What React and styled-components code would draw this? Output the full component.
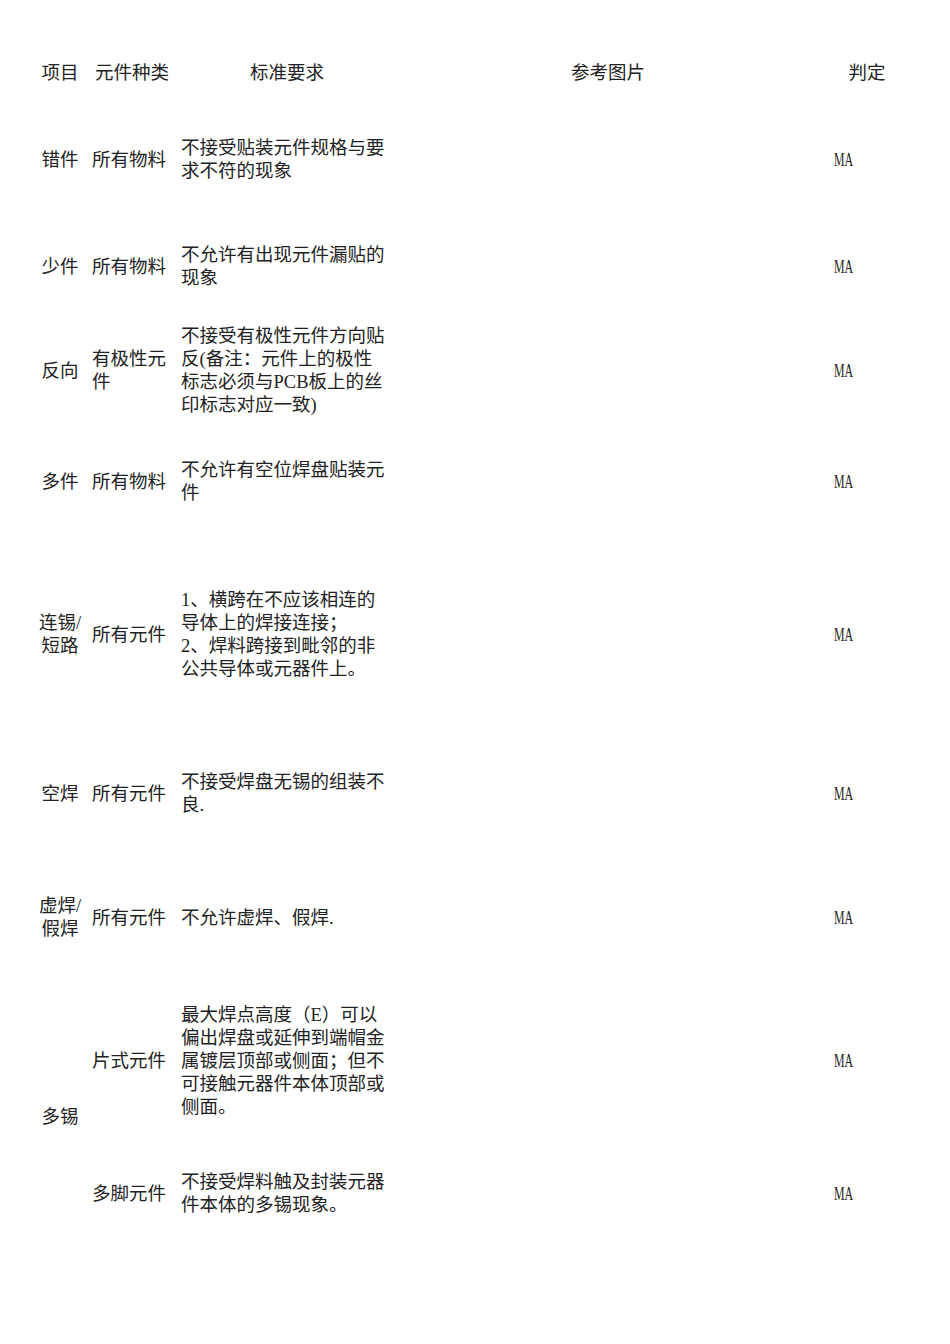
import React from 'react'
import styled, { createGlobalStyle } from 'styled-components'

const GlobalStyle = createGlobalStyle`
body {
  margin: 0;
  background: #fff;
}
`

const Page = styled.div`
width: 950px;
min-height: 1344px;
padding-top: 48px;
box-sizing: border-box;
background: #fff;
font-family: "Liberation Serif", "Noto Sans CJK SC", serif;
font-size: 18.5px;
line-height: 23px;
color: #222;
`

const Sheet = styled.table`
margin-left: 34px;
border-collapse: collapse;
table-layout: fixed;
width: 880px;
`

const Row = styled.tr`
height: ${p => p.h}px;
`

const HeadCell = styled.th`
font-weight: normal;
text-align: center;
vertical-align: middle;
padding: 0;
white-space: nowrap;
`

const ItemCell = styled.td`
text-align: center;
vertical-align: middle;
padding: 0;
white-space: pre-line;
`

const TypeCell = styled.td`
text-align: left;
vertical-align: middle;
padding: 0 0 0 6px;
white-space: pre-line;
`

const RuleCell = styled.td`
text-align: left;
vertical-align: middle;
padding: 0 0 0 3px;
white-space: pre-line;
`

const PicCell = styled.td`
padding: 0;
`

const GradeCell = styled.td`
text-align: left;
vertical-align: middle;
padding: 0 0 0 14px;
`

const Grade = styled.span`
display: inline-block;
font-family: "Liberation Serif", serif;
font-size: 18px;
transform: scaleX(0.66);
transform-origin: left center;
`

const rows = [
  { h: 124, item: '错件', type: '所有物料', rule: '不接受贴装元件规格与要\n求不符的现象' },
  { h: 90, item: '少件', type: '所有物料', rule: '不允许有出现元件漏贴的\n现象' },
  { h: 118, item: '反向', type: '有极性元\n件', rule: '不接受有极性元件方向贴\n反(备注：元件上的极性\n标志必须与PCB板上的丝\n印标志对应一致)' },
  { h: 104, item: '多件', type: '所有物料', rule: '不允许有空位焊盘贴装元\n件' },
  { h: 202, item: '连锡/\n短路', type: '所有元件', rule: '1、横跨在不应该相连的\n导体上的焊接连接；\n2、焊料跨接到毗邻的非\n公共导体或元器件上。' },
  { h: 116, item: '空焊', type: '所有元件', rule: '不接受焊盘无锡的组装不\n良.' },
  { h: 132, item: '虚焊/\n假焊', type: '所有元件', rule: '不允许虚焊、假焊.' },
  { h: 154, item: '多锡', span: 2, type: '片式元件', rule: '最大焊点高度（E）可以\n偏出焊盘或延伸到端帽金\n属镀层顶部或侧面；但不\n可接触元器件本体顶部或\n侧面。' },
  { h: 112, type: '多脚元件', rule: '不接受焊料触及封装元器\n件本体的多锡现象。' },
]

export default function App() {
  return (
    <Page>
      <GlobalStyle />
      <Sheet>
        <colgroup>
          <col style={{ width: 52 }} />
          <col style={{ width: 92 }} />
          <col style={{ width: 218 }} />
          <col style={{ width: 424 }} />
          <col style={{ width: 94 }} />
        </colgroup>
        <thead>
          <Row h={50}>
            <HeadCell>项目</HeadCell>
            <HeadCell>元件种类</HeadCell>
            <HeadCell>标准要求</HeadCell>
            <HeadCell>参考图片</HeadCell>
            <HeadCell>判定</HeadCell>
          </Row>
        </thead>
        <tbody>
          {rows.map((r, i) => (
            <Row key={i} h={r.h}>
              {r.item && <ItemCell rowSpan={r.span || 1}>{r.item}</ItemCell>}
              <TypeCell>{r.type}</TypeCell>
              <RuleCell>{r.rule}</RuleCell>
              <PicCell />
              <GradeCell><Grade>MA</Grade></GradeCell>
            </Row>
          ))}
        </tbody>
      </Sheet>
    </Page>
  )
}
